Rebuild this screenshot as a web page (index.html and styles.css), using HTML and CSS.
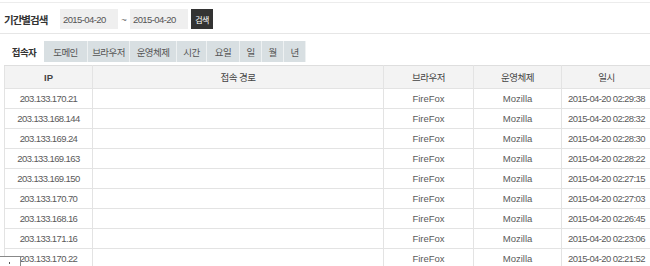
FILE: index.html
```html
<!DOCTYPE html>
<html lang="ko">
<head>
<meta charset="utf-8">
<link rel="stylesheet" href="styles.css">
</head>
<body>
<div class="topline"></div>
<div class="search">
  <span class="label">기간별검색</span>
  <span class="date num">2015-04-20</span>
  <span class="tilde">~</span>
  <span class="date num">2015-04-20</span>
  <span class="btn">검색</span>
</div>
<div class="tabs">
  <span class="tab active">접속자</span>
  <span class="tab">도메인</span>
  <span class="tab">브라우저</span>
  <span class="tab">운영체제</span>
  <span class="tab">시간</span>
  <span class="tab">요일</span>
  <span class="tab">일</span>
  <span class="tab">월</span>
  <span class="tab">년</span>
</div>
<table class="grid">
  <colgroup>
    <col class="c-ip"><col class="c-path"><col class="c-br"><col class="c-os"><col class="c-dt">
  </colgroup>
  <thead>
    <tr><th class="ip">IP</th><th>접속 경로</th><th>브라우저</th><th>운영체제</th><th>일시</th></tr>
  </thead>
  <tbody>
    <tr><td class="num">203.133.170.21</td><td></td><td>FireFox</td><td>Mozilla</td><td class="num">2015-04-20 02:29:38</td></tr>
    <tr><td class="num">203.133.168.144</td><td></td><td>FireFox</td><td>Mozilla</td><td class="num">2015-04-20 02:28:32</td></tr>
    <tr><td class="num">203.133.169.24</td><td></td><td>FireFox</td><td>Mozilla</td><td class="num">2015-04-20 02:28:30</td></tr>
    <tr><td class="num">203.133.169.163</td><td></td><td>FireFox</td><td>Mozilla</td><td class="num">2015-04-20 02:28:22</td></tr>
    <tr><td class="num">203.133.169.150</td><td></td><td>FireFox</td><td>Mozilla</td><td class="num">2015-04-20 02:27:15</td></tr>
    <tr><td class="num">203.133.170.70</td><td></td><td>FireFox</td><td>Mozilla</td><td class="num">2015-04-20 02:27:03</td></tr>
    <tr><td class="num">203.133.168.16</td><td></td><td>FireFox</td><td>Mozilla</td><td class="num">2015-04-20 02:26:45</td></tr>
    <tr><td class="num">203.133.171.16</td><td></td><td>FireFox</td><td>Mozilla</td><td class="num">2015-04-20 02:23:06</td></tr>
    <tr><td class="num">203.133.170.22</td><td></td><td>FireFox</td><td>Mozilla</td><td class="num">2015-04-20 02:21:52</td></tr>
  </tbody>
</table>
<div class="corner"><span class="dot"></span></div>
</body>
</html>
```
FILE: styles.css
```css
html, body {
  margin: 0;
  padding: 0;
  background: #fff;
  overflow: hidden;
}
body {
  width: 650px;
  height: 266px;
  position: relative;
  font-family: "Liberation Sans", "Noto Sans CJK KR", sans-serif;
  font-size: 9.5px;
  color: #5a5a5a;
}
.topline {
  height: 2px;
  border-bottom: 1px solid #ececec;
}
.search {
  display: flex;
  align-items: center;
  height: 20px;
  padding: 6px 0 4px 4px;
  border-bottom: 1px solid #e6e6e6;
}
.label {
  font-family: "Noto Sans CJK KR", sans-serif;
  font-weight: bold;
  font-size: 10.5px;
  letter-spacing: -1px;
  color: #333;
  width: 56px;
}
.date {
  display: flex;
  align-items: center;
  width: 55px;
  height: 20px;
  padding-left: 3px;
  background: #efefef;
  color: #555;
}
.tilde {
  width: 12px;
  text-align: center;
  color: #666;
}
.btn {
  display: flex;
  align-items: center;
  justify-content: center;
  width: 22px;
  height: 20px;
  margin-left: 3px;
  background: #333;
  color: #fff;
  font-family: "Noto Sans CJK KR", sans-serif;
  font-size: 8px;
  letter-spacing: -0.5px;
}
.num {
  letter-spacing: -0.6px;
}
.tabs {
  display: flex;
  margin: 7px 0 0 4px;
  height: 21px;
}
.tab {
  display: flex;
  align-items: center;
  justify-content: center;
  height: 21px;
  background: #d8dfe2;
  border-right: 1px solid #eef1f2;
  box-sizing: border-box;
  font-family: "Noto Sans CJK KR", sans-serif;
  font-size: 9.5px;
  letter-spacing: -0.6px;
  color: #555;
}
.tab.active {
  background: #fff;
  font-weight: bold;
  color: #333;
  border-right: none;
}
.tab:nth-child(1) { width: 40px; }
.tab:nth-child(2) { width: 44px; }
.tab:nth-child(3) { width: 42px; }
.tab:nth-child(4) { width: 47px; }
.tab:nth-child(5) { width: 30px; }
.tab:nth-child(6) { width: 33px; }
.tab:nth-child(7) { width: 22px; }
.tab:nth-child(8) { width: 22px; }
.tab:nth-child(9) { width: 22px; }
.grid {
  margin: 3px 0 0 4px;
  width: 647px;
  border-collapse: collapse;
  table-layout: fixed;
}
.c-ip { width: 88px; }
.c-path { width: 291px; }
.c-br { width: 90px; }
.c-os { width: 88px; }
.c-dt { width: 90px; }
.grid th, .grid td {
  border: 1px solid #e3e3e3;
  text-align: center;
  padding: 0;
  white-space: nowrap;
  overflow: hidden;
}
.grid th {
  height: 22px;
  background: #f3f3f3;
  font-family: "Noto Sans CJK KR", sans-serif;
  font-weight: normal;
  font-size: 9.5px;
  letter-spacing: -0.5px;
  color: #444;
  border-top-color: #dedede;
}
.grid th.ip {
  font-family: "Liberation Sans", sans-serif;
  font-weight: bold;
  letter-spacing: 0;
}
.grid td {
  height: 19px;
}
.corner {
  position: absolute;
  left: 0;
  top: 256px;
  width: 20px;
  height: 12px;
  border-top: 1px solid #888;
  border-right: 1px solid #888;
  background: #fff;
}
.dot {
  position: absolute;
  left: 9px;
  top: 5px;
  width: 1px;
  height: 2px;
  background: #555;
}
```
